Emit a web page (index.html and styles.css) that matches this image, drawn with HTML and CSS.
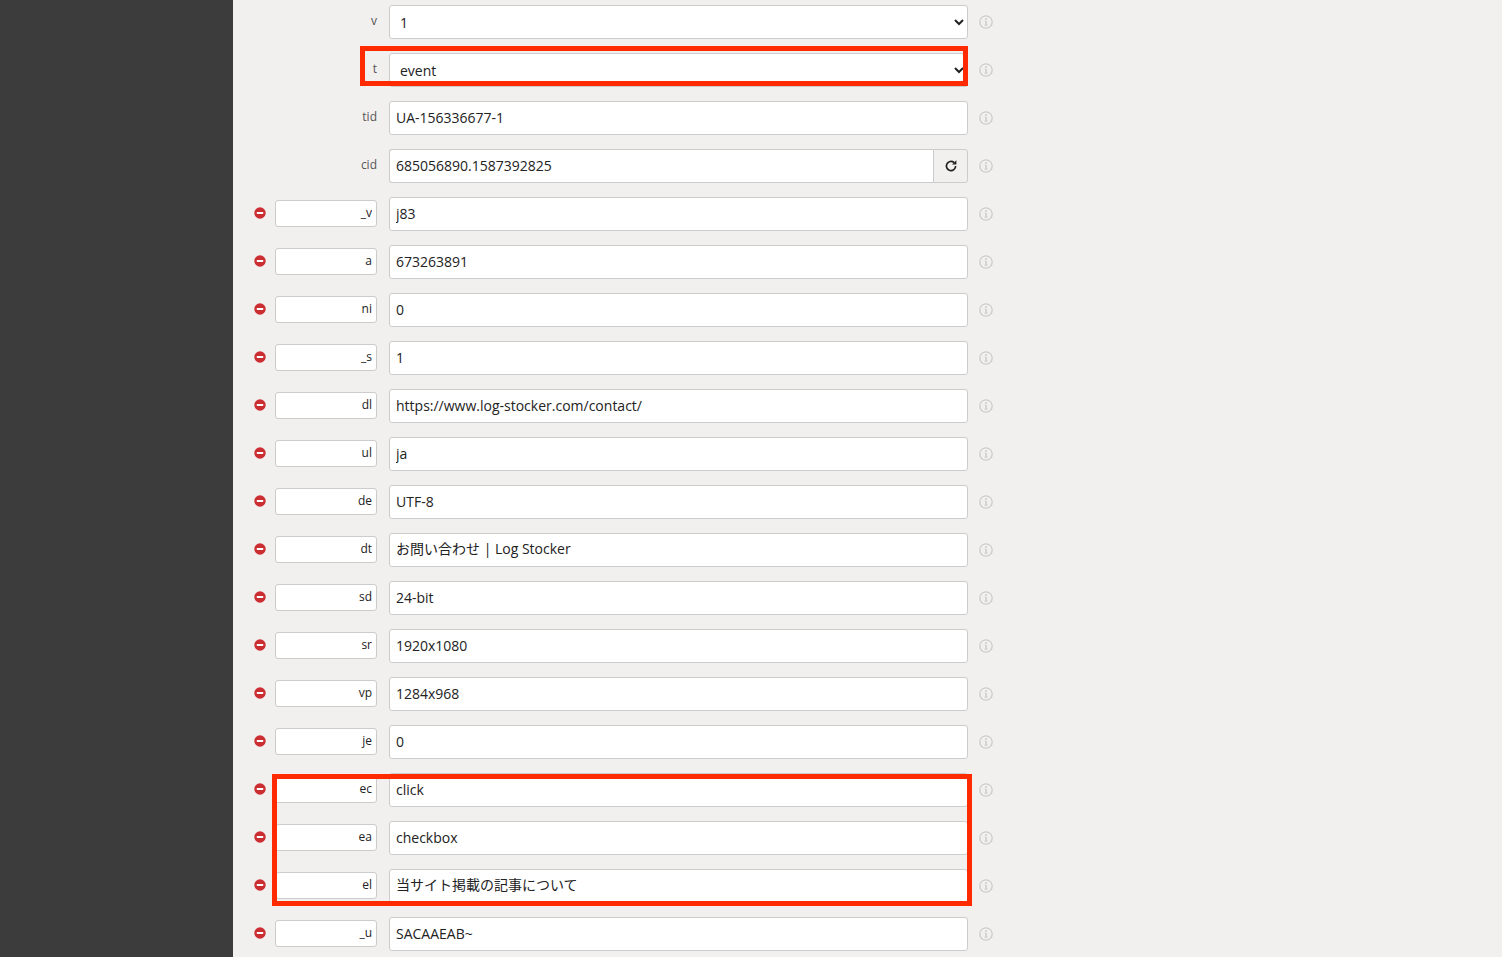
FILE: index.html
```html
<!DOCTYPE html>
<html lang="ja">
<head>
<meta charset="utf-8">
<title>Hit Builder</title>
<link rel="stylesheet" href="styles.css">
</head>
<body>
<svg class="defs" width="0" height="0" aria-hidden="true">
  <symbol id="i-info" viewBox="0 0 14 14">
    <circle cx="7" cy="7" r="6.2" fill="none" stroke="currentColor" stroke-width="1.3"/>
    <circle cx="7" cy="4.3" r="1" fill="currentColor"/>
    <path d="M5.8 6H7.8V9.6H8.5V10.7H5.6V9.6H6.3V7.1H5.8Z" fill="currentColor"/>
  </symbol>
  <symbol id="i-minus" viewBox="0 0 12 12">
    <circle cx="6" cy="6" r="5.7" fill="currentColor"/>
    <rect x="2.8" y="5.1" width="6.4" height="1.8" rx="0.4" fill="#fff"/>
  </symbol>
</svg>
<aside class="sidebar"></aside>
<main class="main">
  <form class="form">
    <div class="row"><label class="label">v</label><select class="control select"><option>1</option></select><svg class="info"><use href="#i-info"/></svg></div>
    <div class="row"><label class="label">t</label><select class="control select"><option>event</option></select><svg class="info"><use href="#i-info"/></svg></div>
    <div class="row"><label class="label">tid</label><input class="control" value="UA-156336677-1"><svg class="info"><use href="#i-info"/></svg></div>
    <div class="row"><label class="label">cid</label><div class="group"><input class="control group-input" value="685056890.1587392825"><button class="addon" type="button"><svg width="14" height="14" viewBox="0 0 14 14"><path d="M11.6 7A4.6 4.6 0 1 1 10 3.5" fill="none" stroke="currentColor" stroke-width="1.7"/><path d="M12.4 1.2V5.6H8Z" fill="currentColor"/></svg></button></div><svg class="info"><use href="#i-info"/></svg></div>
    <div class="row"><svg class="minus"><use href="#i-minus"/></svg><input class="key" value="_v"><input class="control" value="j83"><svg class="info"><use href="#i-info"/></svg></div>
    <div class="row"><svg class="minus"><use href="#i-minus"/></svg><input class="key" value="a"><input class="control" value="673263891"><svg class="info"><use href="#i-info"/></svg></div>
    <div class="row"><svg class="minus"><use href="#i-minus"/></svg><input class="key" value="ni"><input class="control" value="0"><svg class="info"><use href="#i-info"/></svg></div>
    <div class="row"><svg class="minus"><use href="#i-minus"/></svg><input class="key" value="_s"><input class="control" value="1"><svg class="info"><use href="#i-info"/></svg></div>
    <div class="row"><svg class="minus"><use href="#i-minus"/></svg><input class="key" value="dl"><input class="control" value="https://www.log-stocker.com/contact/"><svg class="info"><use href="#i-info"/></svg></div>
    <div class="row"><svg class="minus"><use href="#i-minus"/></svg><input class="key" value="ul"><input class="control" value="ja"><svg class="info"><use href="#i-info"/></svg></div>
    <div class="row"><svg class="minus"><use href="#i-minus"/></svg><input class="key" value="de"><input class="control" value="UTF-8"><svg class="info"><use href="#i-info"/></svg></div>
    <div class="row"><svg class="minus"><use href="#i-minus"/></svg><input class="key" value="dt"><input class="control control-cjk" value="お問い合わせ | Log Stocker"><svg class="info"><use href="#i-info"/></svg></div>
    <div class="row"><svg class="minus"><use href="#i-minus"/></svg><input class="key" value="sd"><input class="control" value="24-bit"><svg class="info"><use href="#i-info"/></svg></div>
    <div class="row"><svg class="minus"><use href="#i-minus"/></svg><input class="key" value="sr"><input class="control" value="1920x1080"><svg class="info"><use href="#i-info"/></svg></div>
    <div class="row"><svg class="minus"><use href="#i-minus"/></svg><input class="key" value="vp"><input class="control" value="1284x968"><svg class="info"><use href="#i-info"/></svg></div>
    <div class="row"><svg class="minus"><use href="#i-minus"/></svg><input class="key" value="je"><input class="control" value="0"><svg class="info"><use href="#i-info"/></svg></div>
    <div class="row"><svg class="minus"><use href="#i-minus"/></svg><input class="key" value="ec"><input class="control" value="click"><svg class="info"><use href="#i-info"/></svg></div>
    <div class="row"><svg class="minus"><use href="#i-minus"/></svg><input class="key" value="ea"><input class="control" value="checkbox"><svg class="info"><use href="#i-info"/></svg></div>
    <div class="row"><svg class="minus"><use href="#i-minus"/></svg><input class="key" value="el"><input class="control control-cjk" value="当サイト掲載の記事について"><svg class="info"><use href="#i-info"/></svg></div>
    <div class="row"><svg class="minus"><use href="#i-minus"/></svg><input class="key" value="_u"><input class="control" value="SACAAEAB~"><svg class="info"><use href="#i-info"/></svg></div>
  </form>
  <div class="mark mark-type"></div>
  <div class="mark mark-event"></div>
</main>
</body>
</html>
```

FILE: styles.css
```css
* { box-sizing: border-box; }
html, body { height: 100%; margin: 0; }
body {
  display: flex;
  height: 957px;
  overflow: hidden;
  background: #f1f0ee;
  color: #222;
  font-family: "Open Sans", "Noto Sans CJK JP", sans-serif;
  font-size: 14px;
}
.defs { position: absolute; }
.sidebar { flex: 0 0 233px; background: #3c3c3c; }
.main { position: relative; flex: 1; padding: 5px 0 0 16px; }
.form { display: flex; flex-direction: column; gap: 14.05px; width: 755px; }
.row {
  display: grid;
  grid-template-columns: 26px 114px 579px 36px;
  align-items: center;
  height: 33.95px;
}
.label {
  grid-column: 1 / 3;
  padding: 0 12px 3px 0;
  text-align: right;
  font-size: 12px;
  color: #555;
}
.minus { width: 12px; height: 12px; margin-left: 5px; margin-top: -1px; color: #cb2d30; }
.key {
  width: 102px;
  height: 27px;
  padding: 0 4px 2px;
  border: 1px solid #ccc;
  border-radius: 3px;
  background: #fff;
  color: #222;
  font: 12px "Open Sans", sans-serif;
  text-align: right;
}
.control {
  width: 100%;
  height: 33.95px;
  padding: 0 6px;
  border: 1px solid #ccc;
  border-radius: 3px;
  background: #fff;
  color: #222;
  font: 14px "Open Sans", "Noto Sans CJK JP", sans-serif;
}
.control-cjk { padding-bottom: 3px; }
.select { padding: 2px 6px 0; }
.group { display: flex; }
.group-input { flex: 1; border-radius: 3px 0 0 3px; border-right: 0; }
.addon {
  flex: 0 0 35px;
  display: flex;
  align-items: center;
  justify-content: center;
  padding: 0;
  border: 1px solid #ccc;
  border-radius: 0 3px 3px 0;
  background: #f1f0ee;
  color: #222;
}
.info { justify-self: center; width: 14px; height: 14px; color: #ccc; }
.mark { position: absolute; border: 5px solid #ff2a00; }
.mark-type { left: 127px; top: 46px; width: 608px; height: 40px; }
.mark-event { left: 39px; top: 774px; width: 700px; height: 132px; }
```
